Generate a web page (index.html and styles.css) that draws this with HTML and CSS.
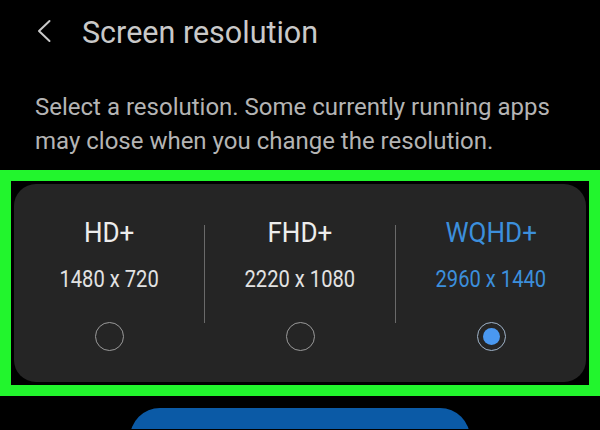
FILE: index.html
```html
<!DOCTYPE html>
<html lang="en">
<head>
<meta charset="utf-8">
<title>Screen resolution</title>
<link rel="stylesheet" href="styles.css">
</head>
<body>
<header class="header">
  <svg class="back" width="18" height="24" viewBox="0 0 18 24" aria-hidden="true">
    <polyline points="14.5,2 4,12 14.5,22" fill="none" stroke="#c9c9c9" stroke-width="2" stroke-linecap="round" stroke-linejoin="round"/>
  </svg>
  <h1 class="title">Screen resolution</h1>
</header>
<p class="desc">Select a resolution. Some currently running apps may close when you change the resolution.</p>
<section class="frame">
  <div class="card">
    <div class="option">
      <div class="opt-name">HD+</div>
      <div class="opt-res">1480 x 720</div>
      <span class="radio"></span>
    </div>
    <div class="divider"></div>
    <div class="option">
      <div class="opt-name">FHD+</div>
      <div class="opt-res">2220 x 1080</div>
      <span class="radio"></span>
    </div>
    <div class="divider"></div>
    <div class="option selected">
      <div class="opt-name">WQHD+</div>
      <div class="opt-res">2960 x 1440</div>
      <span class="radio"><span class="dot"></span></span>
    </div>
  </div>
</section>
<div class="btn-row"><div class="apply"></div></div>
</body>
</html>
```
FILE: styles.css
```css
html, body {
  margin: 0;
  padding: 0;
  background: #000;
  height: 430px;
  overflow: hidden;
  font-family: Roboto, "Liberation Sans", sans-serif;
}
.header {
  display: flex;
  align-items: center;
  padding: 15px 0 0 35px;
  height: 36px;
}
.back {
  display: block;
  margin-top: -4px;
}
.title {
  margin: 0 0 0 29px;
  font-size: 30.5px;
  line-height: 36px;
  font-weight: 400;
  color: #c9c9c9;
}
.desc {
  margin: 39px 0 0 0;
  padding: 0 35px;
  font-size: 24px;
  line-height: 34px;
  color: #b4b4b4;
}
.frame {
  margin-top: 12px;
  border: 11px solid #22f52d;
  padding: 3px;
  background: #000;
}
.card {
  background: #252525;
  border-radius: 22px;
  display: grid;
  grid-template-columns: 1fr 1px 1fr 1px 1fr;
  padding: 33px 0 31px;
}
.option {
  display: flex;
  flex-direction: column;
  align-items: center;
}
.opt-name {
  font-size: 28px;
  line-height: 32px;
  color: #ededed;
  transform: scaleX(0.93);
}
.opt-res {
  margin-top: 16px;
  font-size: 24px;
  line-height: 28px;
  color: #e2e2e2;
  transform: scaleX(0.84);
}
.selected .opt-name,
.selected .opt-res {
  color: #3c8fdc;
}
.radio {
  margin-top: 29px;
  width: 27px;
  height: 27px;
  border: 1.5px solid #9a9a9a;
  border-radius: 50%;
  display: flex;
  align-items: center;
  justify-content: center;
}
.selected .radio {
  border-color: #9fb3c8;
}
.dot {
  width: 17px;
  height: 17px;
  border-radius: 50%;
  background: #4a98f0;
}
.divider {
  background: #6a6a6a;
  height: 98px;
  margin-top: 8px;
}
.btn-row {
  display: flex;
  justify-content: center;
  margin-top: 12px;
  height: 21px;
  overflow: hidden;
}
.apply {
  flex: none;
  width: 340px;
  height: 60px;
  border-radius: 30px;
  background: #0b5aa6;
}
```
